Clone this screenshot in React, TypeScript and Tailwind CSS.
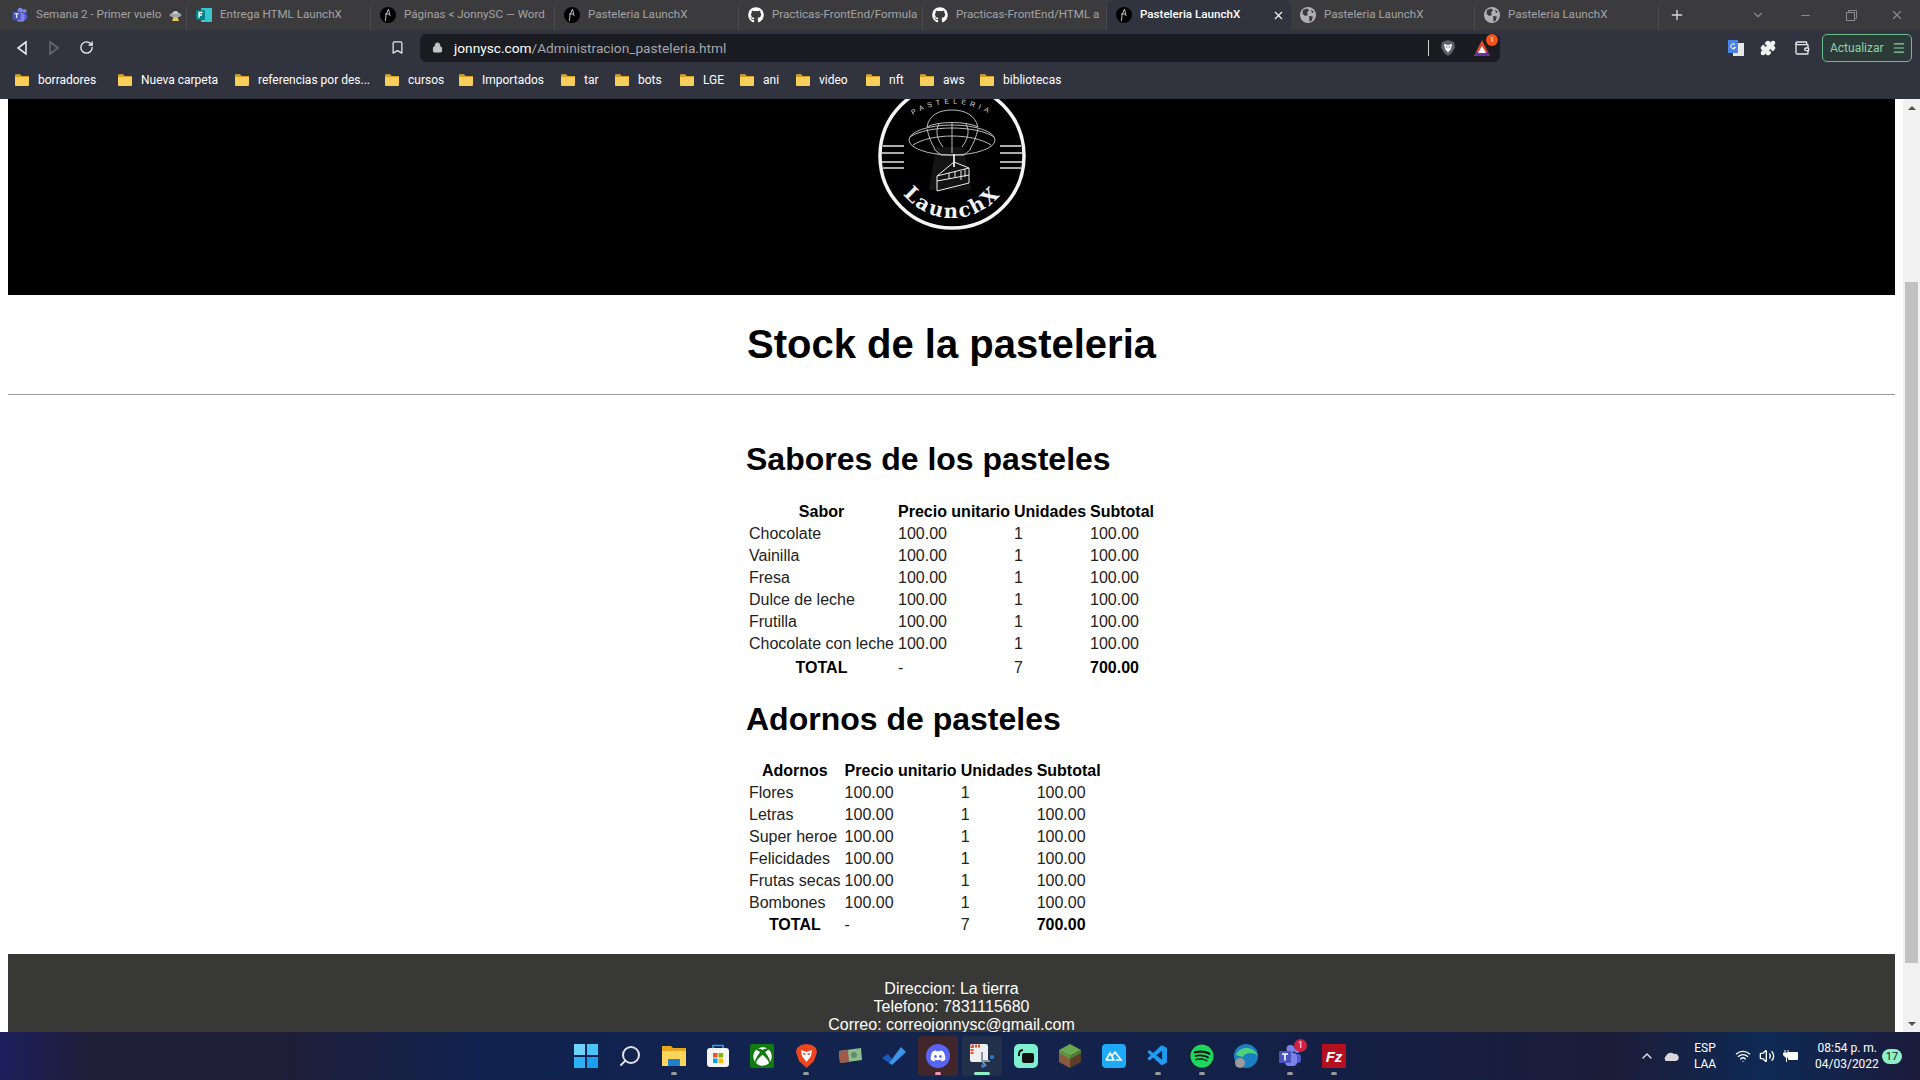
import React from 'react';
import { ChevronDown, ChevronUp, Minus, Plus, X, RotateCw, Bookmark, Lock, Puzzle, Wallet, Menu, Wifi, Volume2, Search } from 'lucide-react';
import { FaDiscord, FaGithub, FaSpotify, FaXbox } from 'react-icons/fa';
import { VscVscode } from 'react-icons/vsc';

const chromeFont = { fontFamily: 'Roboto, sans-serif' };

function Ufo({ size = 16 }: { size?: number }) {
  return (
    <svg width={size} height={size} viewBox="0 0 16 16" className="shrink-0">
      <circle cx="8" cy="8" r="8" fill="#000" />
      <path d="M8.5 2 L6 8 L5.5 14 M8.5 2 L10 9 M5 7 H10" stroke="#bbb" strokeWidth="1" fill="none" />
    </svg>
  );
}

function GlobeFilled() {
  return (
    <svg width="16" height="16" viewBox="0 0 16 16" className="shrink-0">
      <circle cx="8" cy="8" r="8" fill="#b0b0b2" />
      <path d="M3 3 L7 1.5 L9 3 L7 6 L8 8 L5 9 L2.5 6.5 Z M9 9 L13 9.5 L11.5 14 L9.5 14.5 Z M11 2.5 L14 5 L12 6 Z" fill="#3b3b3e" />
    </svg>
  );
}

function TeamsIcon({ size = 16 }: { size?: number }) {
  return (
    <svg width={size} height={size} viewBox="0 0 24 24" className="shrink-0">
      <circle cx="19" cy="6" r="3" fill="#7b83eb" />
      <circle cx="12.5" cy="5" r="4" fill="#7b83eb" />
      <rect x="15" y="10" width="8" height="9" rx="3" fill="#5059c9" />
      <rect x="7" y="9" width="12" height="13" rx="4" fill="#7b83eb" />
      <rect x="1" y="7" width="12" height="12" rx="1" fill="#4b53bc" />
      <path d="M4 10 H10 M7 10 V16.5" stroke="#fff" strokeWidth="1.6" />
    </svg>
  );
}

function FormsIcon() {
  return (
    <svg width="16" height="16" viewBox="0 0 16 16" className="shrink-0">
      <rect x="5" y="1" width="11" height="14" rx="1" fill="#37c6d0" />
      <rect x="0" y="3" width="9" height="10" rx="1" fill="#038387" />
      <path d="M3 11 V5.5 H6.5 M3 8 H6" stroke="#fff" strokeWidth="1.3" fill="none" />
    </svg>
  );
}

const tabs = [
  { title: 'Semana 2 - Primer vuelo', icon: <TeamsIcon />, extra: true },
  { title: 'Entrega HTML LaunchX', icon: <FormsIcon /> },
  { title: 'Páginas < JonnySC — Word', icon: <Ufo /> },
  { title: 'Pasteleria LaunchX', icon: <Ufo /> },
  { title: 'Practicas-FrontEnd/Formula', icon: <FaGithub size={16} className="shrink-0 text-white" /> },
  { title: 'Practicas-FrontEnd/HTML a', icon: <FaGithub size={16} className="shrink-0 text-white" /> },
  { title: 'Pasteleria LaunchX', icon: <Ufo />, active: true },
  { title: 'Pasteleria LaunchX', icon: <GlobeFilled /> },
  { title: 'Pasteleria LaunchX', icon: <GlobeFilled /> },
];

const bookmarks = [
  { label: 'borradores', w: 'w-[103px]' },
  { label: 'Nueva carpeta', w: 'w-[117px]' },
  { label: 'referencias por des...', w: 'w-[150px]' },
  { label: 'cursos', w: 'w-[74px]' },
  { label: 'Importados', w: 'w-[102px]' },
  { label: 'tar', w: 'w-[54px]' },
  { label: 'bots', w: 'w-[65px]' },
  { label: 'LGE', w: 'w-[60px]' },
  { label: 'ani', w: 'w-[56px]' },
  { label: 'video', w: 'w-[70px]' },
  { label: 'nft', w: 'w-[54px]' },
  { label: 'aws', w: 'w-[60px]' },
  { label: 'bibliotecas', w: 'w-[90px]' },
];

const sabores = ['Chocolate', 'Vainilla', 'Fresa', 'Dulce de leche', 'Frutilla', 'Chocolate con leche'];
const adornos = ['Flores', 'Letras', 'Super heroe', 'Felicidades', 'Frutas secas', 'Bombones'];

function Folder() {
  return (
    <svg width="16" height="16" viewBox="0 0 16 16" className="shrink-0">
      <path d="M1 3.5 A1 1 0 0 1 2 2.5 H6 L7.5 4 H14 A1 1 0 0 1 15 5 V13 A1 1 0 0 1 14 14 H2 A1 1 0 0 1 1 13 Z" fill="#f7cf5a" />
      <path d="M1 3.5 A1 1 0 0 1 2 2.5 H6 L7.5 4 H15 V5 H1 Z" fill="#d9a01f" />
    </svg>
  );
}

function Tab({ title, icon, active, extra }: { title: string; icon: React.ReactNode; active?: boolean; extra?: boolean }) {
  if (active) {
    return (
      <div className="w-[184px] h-[30px] bg-[#31343f] flex items-center pl-[9px] pr-[6px] gap-2 rounded-t-md shrink-0">
        {icon}
        <span className="flex-1 text-[11.6px] font-medium text-white whitespace-nowrap">{title}</span>
        <X size={13} className="text-white" />
      </div>
    );
  }
  return (
    <div className="w-[184px] h-[30px] flex items-center shrink-0">
      <div className="flex-1 flex items-center pl-[9px] gap-2 min-w-0">
        {icon}
        <span className="text-[11.6px] text-[#a3a3a6] whitespace-nowrap">{title}</span>
        {extra && (
          <svg width="13" height="12" viewBox="0 0 13 12" className="shrink-0">
            <ellipse cx="6.5" cy="6" rx="6" ry="2.5" fill="#9aa3a8" />
            <path d="M3.5 5 A3 3 0 0 1 9.5 5 Z" fill="#c5ccd0" />
            <path d="M4.5 8 L3 12 H10 L8.5 8 Z" fill="#e6c55a" />
          </svg>
        )}
      </div>
      <span className="w-px h-[24px] mt-[6px] bg-[#4c4c4f]" />
    </div>
  );
}

function Logo() {
  return (
    <svg width="150" height="150" viewBox="0 0 150 150" className="block">
      <circle cx="75" cy="75" r="72" fill="none" stroke="#f4f4f4" strokeWidth="3.5" />
      <defs>
        <path id="arc-top" d="M 24 42 Q 75 3 126 42" />
        <path id="arc-bottom" d="M 13 75 A 62 62 0 0 0 137 75" />
      </defs>
      <text fill="#ddd" fontSize="7" letterSpacing="4" fontFamily="Liberation Sans, sans-serif">
        <textPath href="#arc-top" startOffset="50%" textAnchor="middle">PASTELERIA</textPath>
      </text>
      <text fill="#f4f4f4" fontSize="20" fontWeight="700" letterSpacing="2" fontFamily="DejaVu Serif, serif">
        <textPath href="#arc-bottom" startOffset="50%" textAnchor="middle">LaunchX</textPath>
      </text>
      <g stroke="#e4e4e4" strokeWidth="1.7">
        <path d="M6 65 H27 M5 72 H27 M5 81 H27 M6 87 H27" />
        <path d="M123 65 H144 M123 72 H145 M123 81 H145 M123 87 H144" />
      </g>
      <path d="M59 66 L52 109 H94 L87 66 Z" fill="#141414" />
      <g fill="none" stroke="#cfcfcf" strokeWidth="0.9">
        <path d="M50 46 C52 34 62 29 75 29 C88 29 98 34 101 46" />
        <path d="M50 46 C60 40 90 40 101 46" />
        <ellipse cx="75" cy="59" rx="43" ry="15" />
        <path d="M33 56 C50 44 100 44 117 56" />
        <path d="M36 64 C55 52 95 52 114 64" />
        <path d="M62 43 C58 50 60 58 66 66 M75 42 V72 M89 43 C93 50 91 58 85 66 M50 48 C52 56 54 62 58 68 M101 48 C99 56 97 62 93 68" />
        <path d="M57 68 L64 74 H87 L94 68" />
      </g>
      <g fill="none" stroke="#eee" strokeWidth="1">
        <path d="M60 95 L77 81 L92 87 V102 L60 110 Z" />
        <path d="M60 95 L92 87 M60 100 L92 94" />
        <path d="M77 73 V86" strokeWidth="1.8" />
        <path d="M72 92 V98 M78 90 V96 M84 90 V99 M88 88 V96" />
      </g>
    </svg>
  );
}

function Row({ name }: { name: string }) {
  return (
    <tr>
      <td className="p-px leading-[18px] whitespace-nowrap">{name}</td>
      <td className="p-px leading-[18px]">100.00</td>
      <td className="p-px leading-[18px]">1</td>
      <td className="p-px leading-[18px]">100.00</td>
    </tr>
  );
}

function StockTable({ head, rows, totalPad }: { head: string; rows: string[]; totalPad?: string }) {
  return (
    <table className="border-separate border-spacing-[2px] text-[16px] text-[#222]">
      <thead>
        <tr className="text-black">
          <th className="p-px font-bold text-center leading-[18px]">{head}</th>
          <th className="p-px font-bold text-center leading-[18px] whitespace-nowrap">Precio unitario</th>
          <th className="p-px font-bold text-center leading-[18px]">Unidades</th>
          <th className="p-px font-bold text-center leading-[18px]">Subtotal</th>
        </tr>
      </thead>
      <tbody>
        {rows.map((r) => (
          <Row key={r} name={r} />
        ))}
        <tr>
          <th className={`p-px font-bold text-center text-black leading-[18px] ${totalPad ?? ''}`}>TOTAL</th>
          <td className={`p-px leading-[18px] ${totalPad ?? ''}`}>-</td>
          <td className={`p-px leading-[18px] ${totalPad ?? ''}`}>7</td>
          <td className={`p-px font-bold text-black leading-[18px] ${totalPad ?? ''}`}>700.00</td>
        </tr>
      </tbody>
    </table>
  );
}

function Dot({ color = 'bg-[#9a9a9a]', w = 'w-[6px]' }: { color?: string; w?: string }) {
  return <span className={`absolute bottom-px left-1/2 -translate-x-1/2 h-[3px] rounded-full ${w} ${color}`} />;
}

function TaskIcon({ children, dot, active }: { children: React.ReactNode; dot?: React.ReactNode; active?: string }) {
  return (
    <div className="w-11 h-12 flex items-center justify-center">
      <div className={`relative w-10 h-10 rounded-[4px] flex items-center justify-center ${active ?? ''}`}>
        {children}
        {dot}
      </div>
    </div>
  );
}

export default function App() {
  return (
    <div className="w-[1920px] h-[1080px] overflow-hidden flex flex-col bg-white" style={{ fontFamily: '"Liberation Sans", Arial, sans-serif' }}>
      {/* Browser chrome */}
      <div className="h-[99px] bg-[#31343f] shrink-0" style={chromeFont}>
        <div className="h-[30px] bg-[#3b3b3e] flex items-center pl-[3px]">
          {tabs.map((t, i) => (
            <Tab key={i} {...t} />
          ))}
          <Plus size={16} className="ml-[10px] shrink-0 text-[#d8d8d8]" />
          <ChevronDown size={14} className="ml-[66px] shrink-0 text-[#8a8a8a]" />
          <Minus size={13} className="ml-[34px] shrink-0 text-[#8a8a8a]" />
          <svg width="11" height="11" viewBox="0 0 11 11" fill="none" stroke="#8a8a8a" className="ml-[34px] shrink-0">
            <rect x="0.5" y="2.5" width="8" height="8" />
            <path d="M2.5 2.5 V0.5 H10.5 V8.5 H8.5" />
          </svg>
          <X size={14} className="ml-[33px] shrink-0 text-[#8a8a8a]" />
        </div>
        <div className="h-[35px] flex items-center">
          <svg width="14" height="16" viewBox="0 0 14 16" fill="none" stroke="#e8e8e8" strokeWidth="1.6" className="ml-[15px] shrink-0">
            <path d="M11 2 L3 8 L11 14 Z" />
          </svg>
          <svg width="14" height="16" viewBox="0 0 14 16" fill="none" stroke="#666a75" strokeWidth="1.6" className="ml-[18px] shrink-0">
            <path d="M3 2 L11 8 L3 14 Z" />
          </svg>
          <RotateCw size={15} strokeWidth={2.2} className="ml-[18px] shrink-0 text-[#e8e8e8]" />
          <Bookmark size={15} strokeWidth={2} className="ml-[296px] shrink-0 text-[#e8e8e8]" />
          <div className="ml-[15px] w-[1080px] h-[28px] rounded-md bg-[#1a1c22] flex items-center pl-[12px] pr-[9px] shrink-0">
            <Lock size={11} className="text-[#c4c4c4]" fill="#c4c4c4" />
            <span className="ml-[11px] pt-px text-[13.7px] text-white">jonnysc.com</span>
            <span className="pt-px text-[13.7px] text-[#a4a6ad]">/Administracion_pasteleria.html</span>
            <span className="ml-auto w-px h-[16px] bg-[#d0d0d0]" />
            <svg width="16" height="18" viewBox="0 0 16 18" className="ml-[11px]">
              <path d="M8 1 L14 3 L15 8 L12 14 L8 17 L4 14 L1 8 L2 3 Z" fill="#5b5f6a" />
              <path d="M4 5 L8 6 L12 5 L11 10 L8 13.5 L5 10 Z" fill="#fff" />
              <path d="M6 8 H7.5 M8.5 8 H10" stroke="#5b5f6a" strokeWidth="1" />
            </svg>
            <div className="relative ml-[17px] w-[18px] h-[18px]">
              <svg width="18" height="18" viewBox="0 0 18 18">
                <path d="M9 1 L17 17 H1 Z" fill="#e2452f" />
                <path d="M1 17 L3.5 13 H14.5 L17 17 Z" fill="#6b2e9e" />
                <path d="M9 7 L13 14 H5 Z" fill="#fff" />
              </svg>
              <span className="absolute -top-[5px] -right-[7px] w-[12px] h-[12px] rounded-full bg-[#f4511e] text-white text-[8px] leading-[12px] text-center">1</span>
            </div>
          </div>
          <svg width="16" height="18" viewBox="0 0 16 18" className="ml-[228px] shrink-0">
            <rect x="5" y="4" width="11" height="13" fill="#e8e8e8" />
            <rect x="0" y="1" width="10" height="13" fill="#4a84e8" />
            <path d="M7 5.5 A2.5 2.5 0 1 0 7.5 8.5 H5.5" stroke="#fff" fill="none" strokeWidth="1" />
          </svg>
          <Puzzle size={16} fill="#f0f0f0" className="ml-[16px] shrink-0 text-[#f0f0f0]" />
          <Wallet size={16} className="ml-[18px] shrink-0 text-[#e8e8e8]" />
          <div className="ml-[12px] w-[90px] h-[28px] rounded-[5px] border border-[#6cbf8c] bg-[#2c3a38] flex items-center justify-between pl-[7px] pr-[5px] shrink-0">
            <span className="text-[12px] text-[#8fd3a8]">Actualizar</span>
            <Menu size={14} className="text-[#8fd3a8]" />
          </div>
        </div>
        <div className="h-[34px] pb-[4px] flex items-center pl-[14px]">
          {bookmarks.map((b) => (
            <div key={b.label} className={`${b.w} flex items-center gap-[8px] shrink-0`}>
              <Folder />
              <span className="text-[12px] text-white whitespace-nowrap">{b.label}</span>
            </div>
          ))}
        </div>
      </div>

      {/* Page viewport */}
      <div className="flex-1 flex min-h-0">
        <div className="flex-1 pl-2 pr-2 min-w-0 overflow-hidden">
          <header className="h-[196px] bg-black overflow-hidden flex justify-center">
            <div className="-mt-[18px]">
              <Logo />
            </div>
          </header>
          <h1 className="text-[40px] font-bold text-center leading-[46px] mt-[26px] text-black">Stock de la pasteleria</h1>
          <hr className="mt-[27px] border-t border-[#9a9a9a]" />
          <div className="w-[408px] ml-[738px]">
            <h2 className="text-[32px] font-bold leading-[37px] mt-[46px] mb-[22px] text-black">Sabores de los pasteles</h2>
            <StockTable head="Sabor" rows={sabores} totalPad="pt-[3px]" />
            <h2 className="text-[32px] font-bold leading-[37px] mt-[21px] mb-[21px] text-black">Adornos de pasteles</h2>
            <StockTable head="Adornos" rows={adornos} />
          </div>
          <footer className="mt-[17px] bg-[#383837] text-white text-center text-[16px] leading-[18px] pt-[26px] pb-10">
            <p>Direccion: La tierra</p>
            <p>Telefono: 7831115680</p>
            <p>Correo: correojonnysc@gmail.com</p>
          </footer>
        </div>
        <div className="w-[17px] bg-[#f1f1f1] flex flex-col items-center shrink-0">
          <div className="h-[17px] flex items-center"><div className="border-x-[4px] border-x-transparent border-b-[4px] border-b-[#505050]" /></div>
          <div className="mt-[166px] w-[13px] h-[681px] bg-[#c1c1c1]" />
          <div className="mt-auto h-[17px] flex items-center"><div className="border-x-[4px] border-x-transparent border-t-[4px] border-t-[#505050]" /></div>
        </div>
      </div>

      {/* Windows taskbar */}
      <div className="h-12 shrink-0 grid grid-cols-[1fr_auto_1fr] items-center bg-[linear-gradient(90deg,#1c1f5c_0%,#201d36_5%,#201d36_14%,#10224e_25%,#13244e_50%,#141f45_70%,#1c1c38_84%,#0e2a55_92%,#1b1a3a_100%)]" style={chromeFont}>
        <div />
        <div className="flex">
          <TaskIcon>
            <div className="grid grid-cols-2 gap-[1.5px] w-6 h-6">
              <span className="bg-[#6fd3fb]" /><span className="bg-[#49c4f8]" /><span className="bg-[#2cb2f4]" /><span className="bg-[#1a9fec]" />
            </div>
          </TaskIcon>
          <TaskIcon><Search size={24} strokeWidth={2} className="text-[#e2e2e6] -scale-x-100" /></TaskIcon>
          <TaskIcon dot={<Dot />}>
            <svg width="24" height="24" viewBox="0 0 24 24">
              <path d="M0 2 H9 L11 4 H24 V22 H0 Z" fill="#e9a71e" />
              <path d="M0 7 H24 V22 H0 Z" fill="#fcd65c" />
              <rect x="6" y="15" width="12" height="7" rx="1" fill="#1f7fd0" />
            </svg>
          </TaskIcon>
          <TaskIcon>
            <svg width="24" height="24" viewBox="0 0 24 24">
              <path d="M7 6 V1.5 H17 V6" fill="none" stroke="#2aa3e8" strokeWidth="1.6" />
              <rect x="1" y="4" width="22" height="19" rx="3" fill="#f4f4f4" />
              <rect x="7" y="9" width="4.5" height="4.5" fill="#f25022" /><rect x="12.5" y="9" width="4.5" height="4.5" fill="#7fba00" />
              <rect x="7" y="14.5" width="4.5" height="4.5" fill="#00a4ef" /><rect x="12.5" y="14.5" width="4.5" height="4.5" fill="#ffb900" />
            </svg>
          </TaskIcon>
          <TaskIcon>
            <div className="w-6 h-6 rounded-[2px] bg-[#107c10] flex items-center justify-center"><FaXbox size={19} className="text-white" /></div>
          </TaskIcon>
          <TaskIcon dot={<Dot />}>
            <svg width="21" height="24" viewBox="0 0 21 24">
              <path d="M10.5 0 L16 1 L20 4 L21 8 L18 17 L10.5 24 L3 17 L0 8 L1 4 L5 1 Z" fill="#f1451d" />
              <path d="M5 6 L10.5 8 L16 6 L15 12 L10.5 18 L6 12 Z" fill="#fff" />
              <path d="M7 10 H9.5 M11.5 10 H14" stroke="#f1451d" strokeWidth="1.3" />
            </svg>
          </TaskIcon>
          <TaskIcon>
            <svg width="24" height="16" viewBox="0 0 24 16">
              <path d="M1 3 L23 0 L24 12 L2 15 Z" fill="#8fbc8f" />
              <path d="M1 3 L10 2 L11 14 L2 15 Z" fill="#a05a4a" />
              <circle cx="16" cy="7" r="3" fill="#5f8f6a" />
            </svg>
          </TaskIcon>
          <TaskIcon>
            <svg width="24" height="20" viewBox="0 0 24 20">
              <path d="M0 12 L6 8 L10 13 L7 17 Z" fill="#185abd" />
              <path d="M7 17 L19 1 L24 6 L10 19 Z" fill="#3e95e8" />
            </svg>
          </TaskIcon>
          <TaskIcon active="bg-[#41262c]" dot={<Dot color="bg-[#f29ab0]" />}>
            <div className="w-6 h-6 rounded-full bg-[#5865f2] flex items-center justify-center"><FaDiscord size={16} className="text-white" /></div>
          </TaskIcon>
          <TaskIcon active="bg-[#223049]" dot={<Dot color="bg-[#8ef0c4]" w="w-[16px]" />}>
            <svg width="24" height="24" viewBox="0 0 24 24">
              <rect x="0" y="0" width="18" height="18" rx="2" fill="#eee" />
              <path d="M2 2 H10 M2 2 V10" stroke="#e0522a" strokeWidth="3" strokeDasharray="2 1" />
              <path d="M12 8 V17 M12 17 L16 22 M20 17 L12 17" stroke="#8a93a8" strokeWidth="2" />
              <circle cx="22" cy="13" r="2" fill="#2a7fd4" /><circle cx="13" cy="22" r="2" fill="#2a7fd4" />
            </svg>
          </TaskIcon>
          <TaskIcon>
            <div className="relative w-6 h-6 rounded-[5px] bg-[#7df0cf] flex items-center justify-center">
              <span className="w-3 h-[10px] rounded-[2px] bg-[#111] mt-[3px] ml-[3px]" />
              <span className="absolute left-[4px] top-[5px] w-[5px] h-[7px] rounded-tl-[5px] border-l-2 border-t-2 border-[#111]" />
            </div>
          </TaskIcon>
          <TaskIcon>
            <svg width="22" height="24" viewBox="0 0 22 24">
              <path d="M11 0 L22 6 L11 12 L0 6 Z" fill="#6aa84f" />
              <path d="M0 6 L11 12 V24 L0 18 Z" fill="#8a5a3c" />
              <path d="M22 6 L11 12 V24 L22 18 Z" fill="#5e3d28" />
              <path d="M0 6 L11 12 V15 L0 9 Z" fill="#5c9440" />
              <path d="M22 6 L11 12 V15 L22 9 Z" fill="#4c8036" />
            </svg>
          </TaskIcon>
          <TaskIcon>
            <div className="w-6 h-6 rounded-[4px] bg-[#1eaaf8] flex items-center justify-center">
              <svg width="18" height="10" viewBox="0 0 18 10" fill="none" stroke="#fff" strokeWidth="1.6"><path d="M1 9 L5 2 L9 9 H1 M7 5 L10 1 L16 9 H11" /></svg>
            </div>
          </TaskIcon>
          <TaskIcon dot={<Dot />}><VscVscode size={24} className="text-[#1f9cf0]" /></TaskIcon>
          <TaskIcon dot={<Dot />}>
            <div className="w-6 h-6 rounded-full bg-[#111] flex items-center justify-center"><FaSpotify size={24} className="text-[#1ed760]" /></div>
          </TaskIcon>
          <TaskIcon>
            <svg width="24" height="24" viewBox="0 0 24 24">
              <circle cx="12" cy="12" r="12" fill="#1b7fc4" />
              <path d="M2 11 C5 2 20 1 24 12 C22 9 12 7 9 13 C6 12 4 12 2 11 Z" fill="#4fd27a" />
              <circle cx="6" cy="19" r="5" fill="#9a9a9a" />
            </svg>
          </TaskIcon>
          <TaskIcon dot={<Dot />}>
            <div className="relative"><TeamsIcon size={24} />
              <span className="absolute -top-[5px] -right-[5px] w-[13px] h-[13px] rounded-full bg-[#d3213f] text-white text-[9px] leading-[13px] text-center">1</span>
            </div>
          </TaskIcon>
          <TaskIcon dot={<Dot />}>
            <div className="w-6 h-6 bg-[#b40f1e] flex items-center justify-center text-white text-[15px] font-bold italic leading-none" style={{ fontFamily: '"Liberation Sans", sans-serif' }}>Fz</div>
          </TaskIcon>
        </div>
        <div className="flex items-center justify-end text-white pr-[18px]">
          <ChevronUp size={16} className="text-[#e8e8e8]" />
          <svg width="16" height="10" viewBox="0 0 16 10" className="ml-[8px]"><path d="M3 10 A3 3 0 0 1 3 5 A5 5 0 0 1 11 3 A3.5 3.5 0 0 1 13 10 Z" fill="#d8d8dc" /></svg>
          <div className="ml-[11px] w-[30px] text-center text-[12px] leading-[16px]">
            <div>ESP</div>
            <div>LAA</div>
          </div>
          <Wifi size={16} className="ml-[15px]" />
          <Volume2 size={16} className="ml-[8px]" />
          <svg width="16" height="12" viewBox="0 0 16 12" className="ml-[8px]">
            <path d="M2 0 V3 M5 0 V3 M0.5 3 H6.5 V5 L3.5 8 L0.5 5 Z M3.5 8 V12" stroke="#fff" strokeWidth="1" fill="#fff" />
            <rect x="5" y="2" width="10" height="8" rx="1" fill="#fff" />
          </svg>
          <div className="ml-[16px] w-[62px] text-[12px] leading-[16px] text-right whitespace-nowrap">
            <div>08:54 p. m.</div>
            <div>04/03/2022</div>
          </div>
          <span className="ml-[5px] w-5 h-[15px] rounded-full bg-[#8ef0c4] text-[#1a1a1a] text-[11px] leading-[15px] text-center">17</span>
        </div>
      </div>
    </div>
  );
}
